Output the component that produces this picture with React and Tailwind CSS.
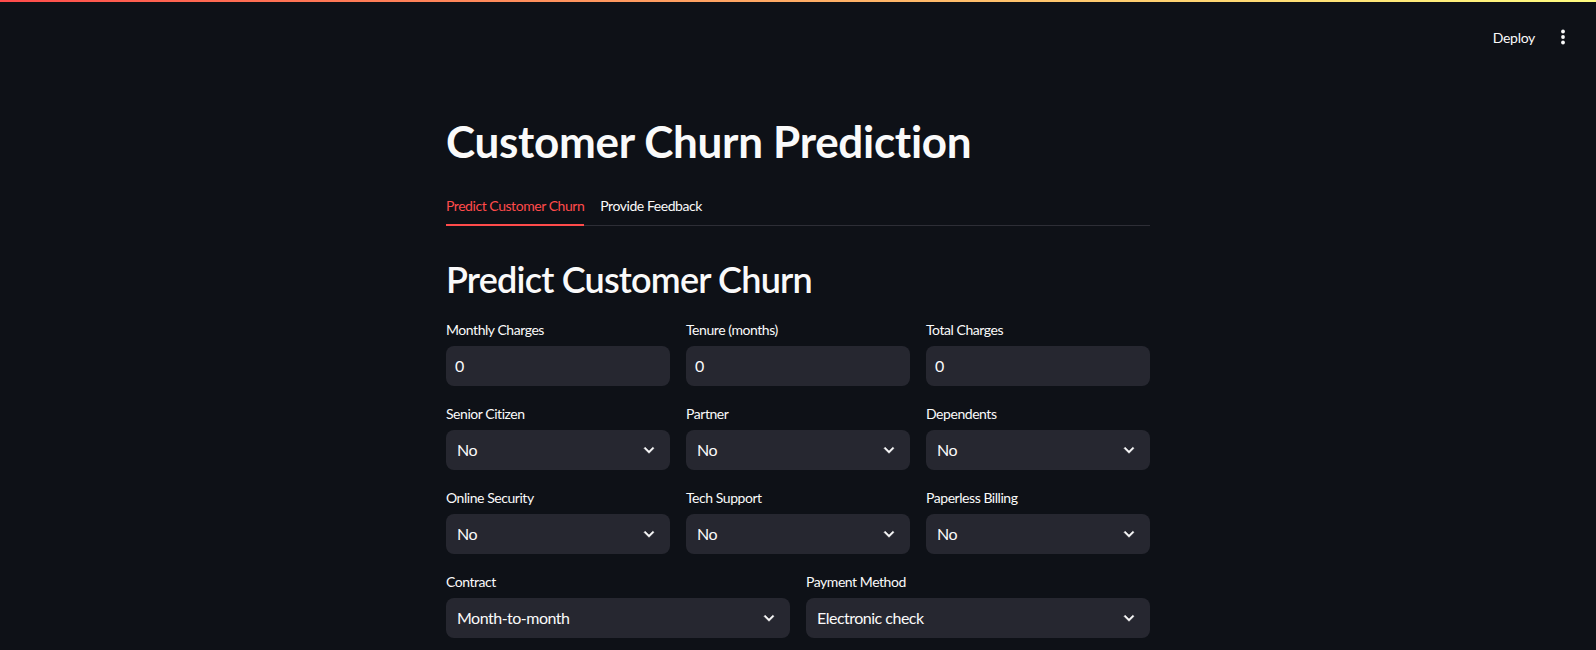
import React from "react";

const font = { fontFamily: "Lato, 'Noto Sans', sans-serif" };

function Chevron() {
  return (
    <svg width="20" height="20" viewBox="0 0 24 24" fill="#fafafa" className="shrink-0">
      <path d="M16.59 8.59L12 13.17 7.41 8.59 6 10l6 6 6-6z" stroke="#fafafa" strokeWidth="0.6" strokeLinejoin="round" />
    </svg>
  );
}

function Label({ children }) {
  return (
    <div className="text-[14px] leading-[16px] h-[16px] mb-[8px] text-[#fafafa] tracking-[-0.45px] whitespace-nowrap">
      {children}
    </div>
  );
}

function NumberField({ label }) {
  return (
    <div className="flex flex-col">
      <Label>{label}</Label>
      <div className="h-[40px] rounded-[8px] bg-[#262730] flex items-center pl-[9px] text-[16px] text-[#fafafa]">0</div>
    </div>
  );
}

function SelectField({ label, value }) {
  return (
    <div className="flex flex-col">
      <Label>{label}</Label>
      <div className="h-[40px] rounded-[8px] bg-[#262730] flex items-center justify-between pl-[11px] pr-[11px] text-[16px] text-[#fafafa]">
        <span className="tracking-[-0.5px] whitespace-nowrap">{value}</span>
        <Chevron />
      </div>
    </div>
  );
}

export default function App() {
  return (
    <div className="min-h-[650px] w-full bg-[#0e1117] text-[#fafafa] overflow-hidden" style={font}>
      <div className="h-[2px] w-full bg-gradient-to-r from-[#ff4b4b] to-[#fffd80]" />
      <div className="flex justify-end items-center h-[70px] pr-[31px]">
        <span className="text-[14px] text-[#fafafa] tracking-[-0.3px]">Deploy</span>
        <svg width="4" height="16" viewBox="0 0 4 16" fill="#fafafa" className="ml-[26px]">
          <circle cx="2" cy="2.5" r="1.9" />
          <circle cx="2" cy="8" r="1.9" />
          <circle cx="2" cy="13.5" r="1.9" />
        </svg>
      </div>
      <div className="mx-auto w-[704px]">
        <h1 className="text-[44px] font-bold leading-[52px] mt-[43px] tracking-[-0.3px] whitespace-nowrap">Customer Churn Prediction</h1>
        <div className="mt-[18px]">
          <div className="flex gap-[16px] text-[14px] h-[40px] tracking-[-0.45px]">
            <div className="text-[#ff4b4b] relative h-full flex items-center">
              Predict Customer Churn
              <div className="absolute left-0 right-0 bottom-[-1px] h-[2px] bg-[#ff4b4b]" />
            </div>
            <div className="text-[#fafafa] h-full flex items-center">Provide Feedback</div>
          </div>
          <div className="h-[1px] bg-[#2d2e36]" />
        </div>
        <h2 className="text-[36px] font-semibold leading-[44px] mt-[31px] tracking-[-0.8px] whitespace-nowrap">Predict Customer Churn</h2>
        <div className="mt-[21px] flex flex-col gap-[20px]">
          <div className="grid grid-cols-3 gap-[16px]">
            <NumberField label="Monthly Charges" />
            <NumberField label="Tenure (months)" />
            <NumberField label="Total Charges" />
          </div>
          <div className="grid grid-cols-3 gap-[16px]">
            <SelectField label="Senior Citizen" value="No" />
            <SelectField label="Partner" value="No" />
            <SelectField label="Dependents" value="No" />
          </div>
          <div className="grid grid-cols-3 gap-[16px]">
            <SelectField label="Online Security" value="No" />
            <SelectField label="Tech Support" value="No" />
            <SelectField label="Paperless Billing" value="No" />
          </div>
          <div className="grid grid-cols-2 gap-[16px]">
            <SelectField label="Contract" value="Month-to-month" />
            <SelectField label="Payment Method" value="Electronic check" />
          </div>
        </div>
      </div>
    </div>
  );
}
